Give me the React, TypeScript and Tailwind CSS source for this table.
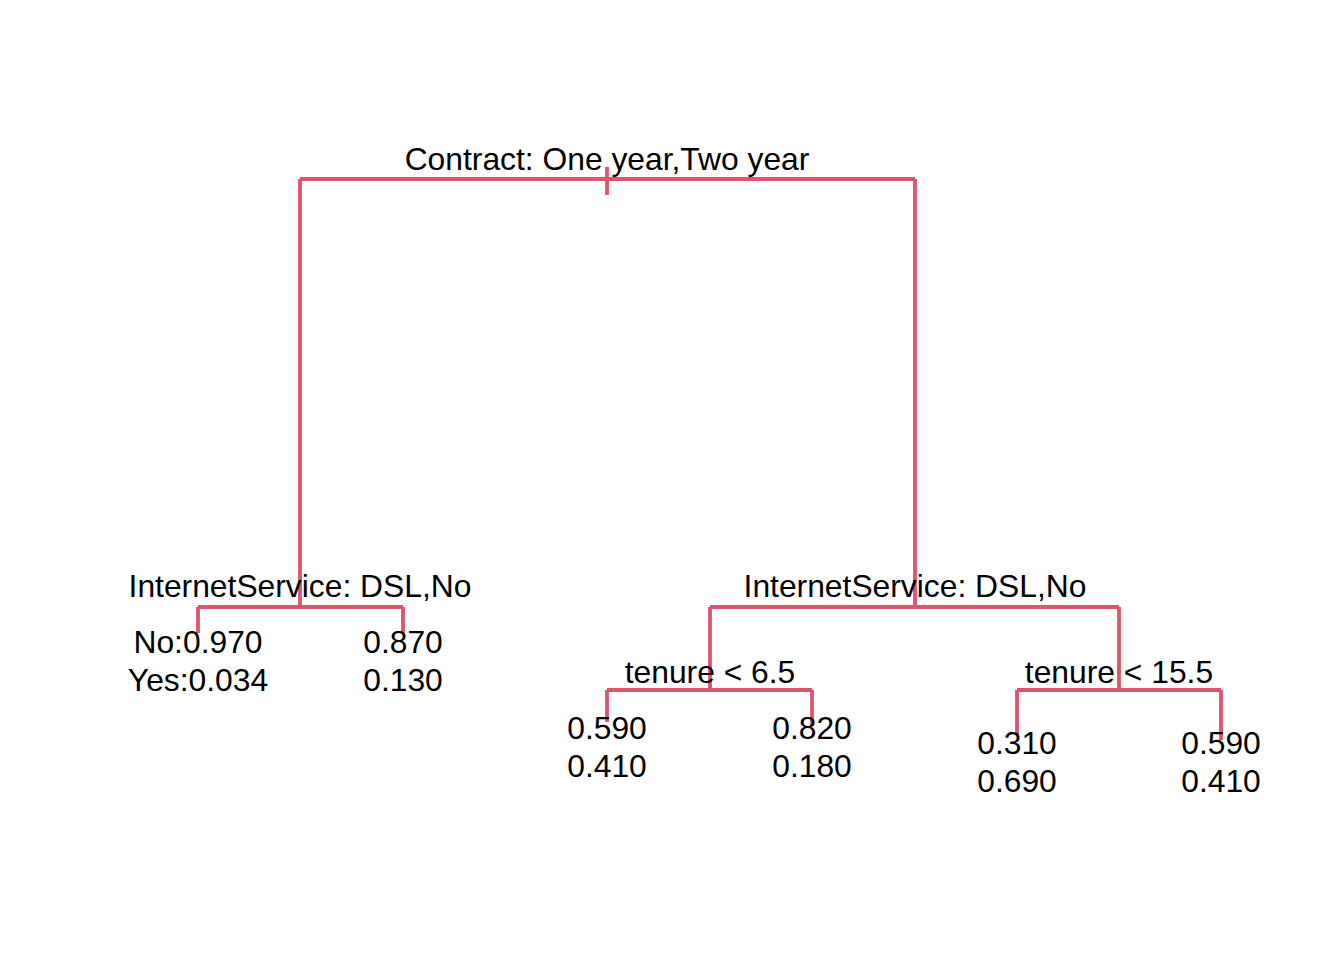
const RED = '#DF536B';

type Seg = [number, number, number, number];

// tree branches: [x1, y1, x2, y2]
const segments: Seg[] = [
  [300, 179, 915, 179],
  [300, 179, 300, 607],
  [915, 179, 915, 607],
  [607, 167, 607, 195],
  // left InternetService split
  [198, 607, 403, 607],
  [198, 607, 198, 633],
  [403, 607, 403, 633],
  // right InternetService split
  [710, 607, 1119, 607],
  [710, 607, 710, 690],
  [1119, 607, 1119, 690],
  // tenure < 6.5
  [607, 690, 812, 690],
  [607, 690, 607, 722],
  [812, 690, 812, 726],
  // tenure < 15.5
  [1017, 690, 1221, 690],
  [1017, 690, 1017, 734],
  [1221, 690, 1221, 740],
];

const labels: { x: number; y: number; text: string }[] = [
  { x: 607, y: 170, text: 'Contract: One year,Two year' },
  { x: 300, y: 597, text: 'InternetService: DSL,No' },
  { x: 915, y: 597, text: 'InternetService: DSL,No' },
  { x: 710, y: 683, text: 'tenure < 6.5' },
  { x: 1119, y: 683, text: 'tenure < 15.5' },
];

const leaves: { x: number; y: number; top: string; bottom: string }[] = [
  { x: 198, y: 653, top: 'No:0.970', bottom: 'Yes:0.034' },
  { x: 403, y: 653, top: '0.870', bottom: '0.130' },
  { x: 607, y: 739, top: '0.590', bottom: '0.410' },
  { x: 812, y: 739, top: '0.820', bottom: '0.180' },
  { x: 1017, y: 754, top: '0.310', bottom: '0.690' },
  { x: 1221, y: 754, top: '0.590', bottom: '0.410' },
];

export default function App() {
  return (
    <div className="w-[1344px] h-[960px] bg-white">
      <svg width={1344} height={960} viewBox="0 0 1344 960">
        <g stroke={RED} strokeWidth={3.8} strokeLinecap="butt" fill="none">
          {segments.map(([x1, y1, x2, y2], i) => (
            <line key={i} x1={x1} y1={y1} x2={x2} y2={y2} />
          ))}
        </g>
        <g
          fill="#000"
          fontFamily='"Liberation Sans", Arial, sans-serif'
          fontSize={31.8}
          textAnchor="middle"
        >
          {labels.map((l, i) => (
            <text key={i} x={l.x} y={l.y}>
              {l.text}
            </text>
          ))}
          {leaves.map((l, i) => (
            <g key={i}>
              <text x={l.x} y={l.y}>{l.top}</text>
              <text x={l.x} y={l.y + 38}>{l.bottom}</text>
            </g>
          ))}
        </g>
      </svg>
    </div>
  );
}
